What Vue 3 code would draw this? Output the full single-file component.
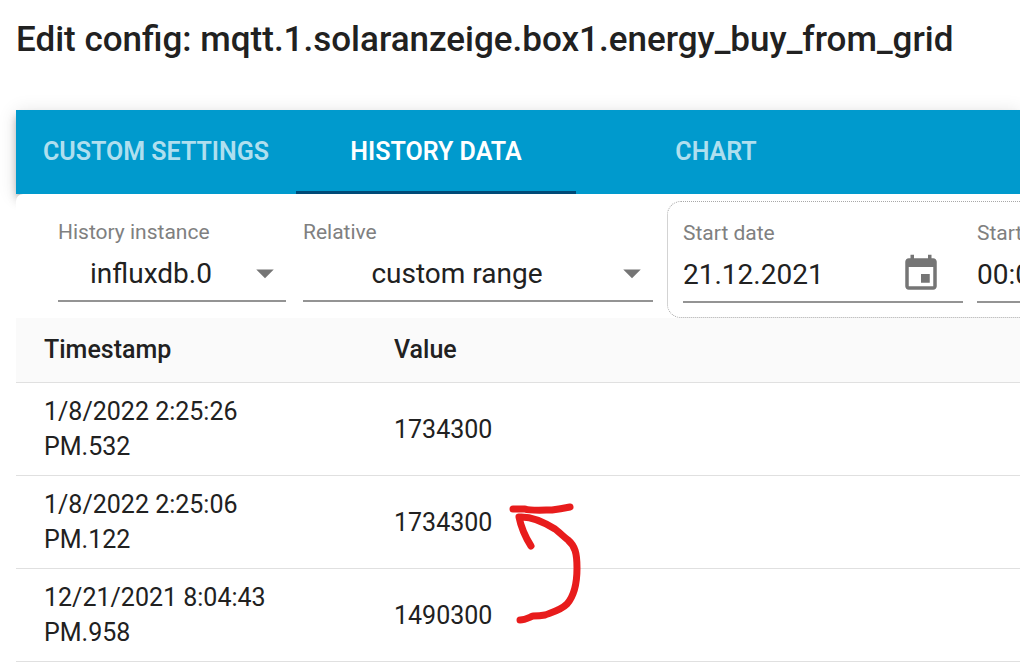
<script setup>
import { ref } from 'vue'

const tabs = ['Custom settings', 'History data', 'Chart']
const activeTab = ref('History data')
const instance = ref('influxdb.0')
const range = ref('custom range')
const startDate = ref('21.12.2021')
const startTime = ref('00:00:00')

const rows = [
  { ts: '1/8/2022 2:25:26 PM.532', value: '1734300' },
  { ts: '1/8/2022 2:25:06 PM.122', value: '1734300' },
  { ts: '12/21/2021 8:04:43 PM.958', value: '1490300' }
]
</script>

<template>
  <main class="page">
    <h1 class="title">Edit config: mqtt.1.solaranzeige.box1.energy_buy_from_grid</h1>

    <nav class="tabs" role="tablist">
      <button
        v-for="tab in tabs"
        :key="tab"
        type="button"
        role="tab"
        class="tab"
        :class="{ active: tab === activeTab }"
        :aria-selected="tab === activeTab"
        @click="activeTab = tab"
      >{{ tab }}</button>
    </nav>

    <section class="panel">
      <div class="filters">
        <div class="field instance">
          <label for="instance">History instance</label>
          <div class="control">
            <select id="instance" v-model="instance">
              <option>influxdb.0</option>
            </select>
            <svg class="caret" viewBox="0 0 24 24" aria-hidden="true"><path d="M7 10l5 5 5-5z" /></svg>
          </div>
        </div>
        <div class="field range">
          <label for="range">Relative</label>
          <div class="control">
            <select id="range" v-model="range">
              <option>custom range</option>
            </select>
            <svg class="caret" viewBox="0 0 24 24" aria-hidden="true"><path d="M7 10l5 5 5-5z" /></svg>
          </div>
        </div>
        <fieldset class="group">
          <div class="field date">
            <label for="start-date">Start date</label>
            <div class="control">
              <input id="start-date" v-model="startDate" type="text" />
              <button type="button" class="pick" aria-label="Change date">
                <svg viewBox="0 0 24 24" aria-hidden="true">
                  <path d="M17 12h-5v5h5v-5zM16 1v2H8V1H6v2H5c-1.11 0-1.99.9-1.99 2L3 19c0 1.1.89 2 2 2h14c1.1 0 2-.9 2-2V5c0-1.1-.9-2-2-2h-1V1h-2zm3 18H5V8h14v11z" />
                </svg>
              </button>
            </div>
          </div>
          <div class="field date">
            <label for="start-time">Start time</label>
            <div class="control">
              <input id="start-time" v-model="startTime" type="text" />
            </div>
          </div>
        </fieldset>
      </div>

      <div class="history">
        <table>
          <thead>
            <tr>
              <th scope="col" class="stamp">Timestamp</th>
              <th scope="col">Value</th>
            </tr>
          </thead>
          <tbody>
            <tr v-for="row in rows" :key="row.ts">
              <td class="stamp">{{ row.ts }}</td>
              <td>{{ row.value }}</td>
            </tr>
          </tbody>
        </table>
        <svg class="arrow" viewBox="508 502 74 124" aria-hidden="true">
          <path d="M513 509H525C530 511 545 510 552 510C560 509 565 508 570 507" />
          <path d="M531 546C524 535 521 527 519 517C532 516 544 522 555 529C559 532 564 537 568 540C575 546 577 553 577 568C577 584 574 596 567 604C561 610 553 612 545 615C540 616 537 616 533 616C528 618 525 620 520 620" />
        </svg>
      </div>
    </section>
  </main>
</template>

<style>
body {
  margin: 0;
  background: #fff;
}
</style>

<style scoped>
.page {
  box-sizing: border-box;
  padding: 12px 0 0 16px;
  overflow: hidden;
  font-family: Roboto, "Liberation Sans", sans-serif;
  color: #212121;
}

.title {
  margin: 0 0 42px;
  font-size: 35px;
  line-height: 56px;
  font-weight: 500;
  white-space: nowrap;
}

.tabs {
  display: flex;
  height: 84px;
  background: #009acd;
  box-shadow: 0 4px 7px -2px rgba(0, 0, 0, 0.2), 0 7px 9px rgba(0, 0, 0, 0.14), 0 2px 18px rgba(0, 0, 0, 0.12);
}

.tab {
  flex: 0 0 280px;
  box-sizing: border-box;
  padding: 3px 0 0;
  border: 0;
  border-bottom: 3px solid transparent;
  background: none;
  color: rgba(255, 255, 255, 0.7);
  font-family: inherit;
  font-size: 25px;
  font-weight: 600;
  line-height: 44px;
  text-transform: uppercase;
}

.tab.active {
  color: #fff;
  border-bottom-color: #004a77;
}

.panel {
  position: relative;
  background: #fff;
  border-radius: 7px 0 0;
}

.filters {
  display: flex;
  align-items: flex-start;
  padding: 7px 0 0 42px;
}

.field {
  display: flex;
  flex: none;
  flex-direction: column;
}

.field label {
  font-size: 21px;
  line-height: 28px;
  color: #808080;
  white-space: nowrap;
}

.control {
  position: relative;
  display: flex;
  align-items: center;
  height: 54px;
  border-bottom: 2px solid #949494;
}

.instance {
  width: 228px;
  margin: 17px 17px 0 0;
}

.range {
  width: 350px;
  margin: 17px 14px 0 0;
}

select,
input {
  width: 100%;
  min-width: 0;
  height: 42px;
  padding: 0;
  border: 0;
  outline: 0;
  background: transparent;
  color: #212121;
  font-family: inherit;
  font-size: 28px;
}

select {
  appearance: none;
  padding-right: 42px;
  text-align: center;
  text-align-last: center;
}

.caret {
  position: absolute;
  right: 0;
  width: 42px;
  height: 42px;
  fill: #757575;
  pointer-events: none;
}

.group {
  display: flex;
  flex: none;
  gap: 14px;
  margin: 0;
  padding: 17px 15px 14px;
  border: 1px dotted #a8a8a8;
  border-radius: 14px;
}

.date {
  width: 280px;
}

.pick {
  display: flex;
  flex: none;
  padding: 0 21px;
  border: 0;
  background: none;
}

.pick svg {
  width: 42px;
  height: 42px;
  fill: #757575;
}

.history {
  position: relative;
}

table {
  width: 100%;
  border-collapse: separate;
  border-spacing: 0;
  table-layout: fixed;
  font-size: 25px;
}

th,
td {
  padding: 11px 42px 11px 28px;
  border-bottom: 1px solid #e0e0e0;
  line-height: 35px;
  text-align: left;
  vertical-align: middle;
}

th {
  line-height: 42px;
  font-weight: 500;
  background: #fafafa;
}

.stamp {
  box-sizing: border-box;
  width: 350px;
}

.arrow {
  position: absolute;
  left: 492px;
  top: 184px;
  width: 74px;
  height: 124px;
  fill: none;
  stroke: #e81c1c;
  stroke-width: 7;
  stroke-linecap: round;
  stroke-linejoin: round;
  pointer-events: none;
}
</style>
